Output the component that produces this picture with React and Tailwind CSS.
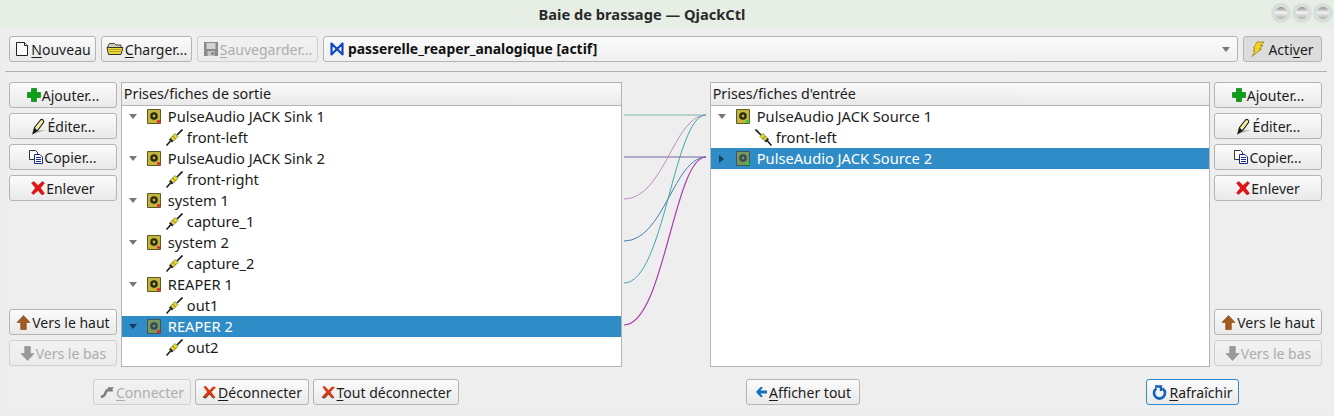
import React from "react";

function IconNew() {
  return (
    <svg width="16" height="16" viewBox="0 0 16 16">
      <path d="M2.500 1.500h8l3 3v10h-11z" fill="#fff" stroke="#222" />
      <path d="M10.500 1.500v3h3" fill="#ddd" stroke="#222" />
    </svg>
  );
}

function IconOpen() {
  return (
    <svg width="18" height="16" viewBox="0 0 18 16">
      <path d="M2 5l1.500-2.500h5L10 4h5v3H2z" fill="#cfcfb0" stroke="#444" />
      <path d="M1 6.500h16l-2 7H2.500z" fill="#e8d93a" stroke="#333" />
      <path d="M3 8.500h12M3.500 10.500h11" stroke="#b8a820" />
    </svg>
  );
}

function IconSave() {
  return (
    <svg width="16" height="16" viewBox="0 0 16 16">
      <path d="M1 1h14v14H1z" fill="#8a8a8a" />
      <path d="M3.500 2h9v6h-9z" fill="#d2d2d2" />
      <path d="M4.500 10h7v5h-7z" fill="#c4c4c4" />
      <path d="M8.500 11h2v3h-2z" fill="#777" />
    </svg>
  );
}

function IconPatch() {
  return (
    <svg width="14" height="14" viewBox="0 0 14 14" fill="none">
      <path d="M1.500 1.500v11l5.500-5.500zM12.500 1.500v11l-5.500-5.500z" stroke="#1546c8" strokeWidth="2.200" strokeLinejoin="round" />
    </svg>
  );
}

function IconBolt() {
  return (
    <svg width="14" height="16" viewBox="0 0 14 16">
      <path d="M6 1h7L9.500 4.500H12L8 8h2.500L1 15.500 4 10H2l2-3H2.500z" fill="#f4d21e" stroke="#8d7a20" strokeWidth="0.700" />
    </svg>
  );
}

function IconAdd() {
  return (
    <svg width="14" height="14" viewBox="0 0 14 14">
      <path d="M4.500 .5h5v4h4v5h-4v4h-5v-4h-4v-5h4z" fill="#0ca018" stroke="#0a7a12" strokeWidth="0.700" />
    </svg>
  );
}

function IconEdit() {
  return (
    <svg width="16" height="17" viewBox="0 0 16 17">
      <path d="M2 16l13-4-7 .5z" fill="#a8a8a8" />
      <path d="M2 15.500l1.500-6L9.500 2c1.500-1.500 4 .5 3 2.500L6.500 12.500z" fill="#f4eda0" stroke="#1c1c1c" strokeWidth="1.100" />
      <path d="M2 15.500l1.500-6 3 3z" fill="#1c1c1c" />
    </svg>
  );
}

function IconCopy() {
  return (
    <svg width="14" height="14" viewBox="0 0 14 14">
      <path d="M.5.5h6l2 2v7h-8z" fill="#fff" stroke="#333" />
      <path d="M5.500 4.500h5.500l2.500 2.500v6.500h-8z" fill="#fff" stroke="#1a2a8a" />
      <path d="M7 7.500h5M7 9.500h5M7 11.500h5" stroke="#1a2a8a" />
    </svg>
  );
}

function IconRemove() {
  return (
    <svg width="14" height="14" viewBox="0 0 14 14">
      <path d="M.5 2l2.500-1.500L7 4.500 11.500.5 13.500 2 9.500 7l4 5.500-2.500 1.500L7 9.500 2.500 13.500.5 12l4-5z" fill="#e81010" stroke="#a01818" strokeWidth="0.500" />
    </svg>
  );
}

function IconUp({ off }) {
  return (
    <svg width="15" height="17" viewBox="0 0 16 17">
      <path d="M8 1l7 7.500h-4V16H5V8.500H1z" fill={off ? "#9a9a9a" : "#a5591c"} stroke={off ? "#8a8a8a" : "#70400f"} strokeWidth="0.600" />
    </svg>
  );
}

function IconDown({ off }) {
  return (
    <svg width="15" height="17" viewBox="0 0 16 17">
      <path d="M8 16L1 8.500h4V1h6v7.500h4z" fill={off ? "#9a9a9a" : "#a5591c"} stroke={off ? "#8a8a8a" : "#70400f"} strokeWidth="0.600" />
    </svg>
  );
}

function IconConnect() {
  return (
    <svg width="15" height="14" viewBox="0 0 17 14">
      <path d="M1 12.500c3.500 0 4.500-2 5.500-5s2-3 4.500-3" fill="none" stroke="#7e7e7e" strokeWidth="3" />
      <path d="M9 1.500h7l-2 2.500 1 2.500H9z" fill="#7e7e7e" />
    </svg>
  );
}

function IconDisconnect() {
  return (
    <svg width="15" height="14" viewBox="0 0 16 14">
      <path d="M1.500 1.500L4 .5l4 4.500 4-4 3 1-5 5 4 5.500-3 1L7.500 9 4 13l-3-1 4.500-5z" fill="#d8380e" />
      <path d="M1 12.500l3 1 4-4.500M12 13.500l2-1" fill="none" stroke="#3a2a20" strokeWidth="1" />
    </svg>
  );
}

function IconShowAll() {
  return (
    <svg width="13" height="12" viewBox="0 0 13 12">
      <path d="M1 6l4.500-5h2.500L5.500 4.500H12v3H5.500L8 11H5.500z" fill="#1270c0" />
    </svg>
  );
}

function IconRefresh() {
  return (
    <svg width="15" height="15" viewBox="0 0 15 15" fill="none">
      <path d="M4.500 3.500a5.500 5.500 0 1 0 6 0" stroke="#1462b8" strokeWidth="2.600" />
      <path d="M3 1.500h6v4.500" stroke="#1462b8" strokeWidth="2.400" />
    </svg>
  );
}

function Speaker({ kind, selected }) {
  const body = selected ? "#7b9460" : "#c4b53c";
  return (
    <svg width="14" height="15" viewBox="0 0 14 15">
      <path d="M.5.5h13v14H.5z" fill={body} stroke={selected ? "#3a5a50" : "#5a5a24"} />
      <circle cx="7" cy="7" r="3.800" fill={selected ? "#2f4d50" : "#2b2b12"} />
      <circle cx="7" cy="7" r="1.400" fill={body} />
      <path d="M10 12.500h3.500" stroke={kind === "out" ? "#e8202a" : "#20d040"} strokeWidth="2.400" />
    </svg>
  );
}

function Plug({ flip }) {
  return (
    <svg width="17" height="17" viewBox="0 0 17 17" className={flip ? "-scale-x-100" : ""}>
      <path d="M.5 16.500l4-4.500" stroke="#111" strokeWidth="1.500" />
      <path d="M3 10.500l1.500-1.500 3 3L6 13.500z" fill="#1c1c1c" />
      <path d="M4.500 9l4.500-4.500 3 3L7.500 12z" fill="#ecdc1c" stroke="#555" strokeWidth="0.600" />
      <path d="M6.500 7l3 3" stroke="#555" strokeWidth="0.800" />
      <path d="M11 6l5.500-5.500" stroke="#1c1c1c" strokeWidth="1.700" />
    </svg>
  );
}

function Underlined({ text, at }) {
  if (at === undefined) return <span>{text}</span>;
  return (
    <span>
      {text.slice(0, at)}
      <span className="underline underline-offset-2">{text[at]}</span>
      {text.slice(at + 1)}
    </span>
  );
}

function Btn({ icon, text, at, off, className = "" }) {
  return (
    <button
      className={
        "h-[26px] flex items-center justify-center gap-[1px] rounded-[3px] border bg-gradient-to-b text-[14px] " +
        (off
          ? "border-[#d0d0d0] from-[#f2f2f2] to-[#ebebeb] text-[#adadad] "
          : "border-[#b4b4b4] from-[#fbfbfb] to-[#e9e9e9] text-[#1c1c1c] ") +
        className
      }
    >
      {icon}
      <Underlined text={text} at={at} />
    </button>
  );
}

function SideButtons() {
  return (
    <div className="w-[108px] h-[284px] flex flex-col">
      <div className="flex flex-col gap-[5px]">
        <Btn icon={<IconAdd />} text="Ajouter..." className="w-full" />
        <Btn icon={<IconEdit />} text="Éditer..." className="w-full" />
        <Btn icon={<IconCopy />} text="Copier..." className="w-full" />
        <Btn icon={<IconRemove />} text="Enlever" className="w-full" />
      </div>
      <div className="mt-auto flex flex-col gap-[5px]">
        <Btn icon={<IconUp />} text="Vers le haut" className="w-full" />
        <Btn icon={<IconDown off />} text="Vers le bas" off className="w-full" />
      </div>
    </div>
  );
}

function ClientRow({ label, open, kind, selected }) {
  return (
    <div
      className={
        "h-[21px] flex items-center pl-[5px] " +
        (selected ? "bg-[#308cc6] text-white" : "text-[#1c1c1c]")
      }
    >
      <span className="w-[12px] flex justify-center">
        {open ? (
          <span className={"w-0 h-0 border-x-[4px] border-x-transparent border-t-[5px] " + (selected ? "border-t-[#15405c]" : "border-t-[#777777]")} />
        ) : (
          <span className="w-0 h-0 border-y-[4px] border-y-transparent border-l-[5px] border-l-[#15405c]" />
        )}
      </span>
      <span className="ml-[8px] w-[14px] flex">
        <Speaker kind={kind} selected={selected} />
      </span>
      <span className="ml-[7px] -translate-y-px">{label}</span>
    </div>
  );
}

function PortRow({ label, flip }) {
  return (
    <div className="h-[21px] flex items-center pl-[44px] text-[#1c1c1c]">
      <Plug flip={flip} />
      <span className="ml-[4px] -translate-y-px">{label}</span>
    </div>
  );
}

function Tree({ title, children }) {
  return (
    <div className="w-[501px] h-[285px] border border-[#b4b4b4] bg-white text-[14.67px] flex flex-col">
      <div className="h-[23px] shrink-0 pl-[2px] flex items-center bg-gradient-to-b from-[#fafafa] to-[#eaeaea] border-b border-[#b4b4b4] text-[#1c1c1c] text-[14.3px]">
        {title}
      </div>
      {children}
    </div>
  );
}

function Connections() {
  const curve = (y1, y2) => `M0 ${y1}C40 ${y1} 50 ${y2} 82 ${y2}`;
  return (
    <svg width="86" height="285" viewBox="0 0 86 285" fill="none" className="absolute left-[1px] top-0">
      <path d={curve(33, 33)} stroke="#a5c9c5" strokeWidth="1.300" />
      <path d={curve(75, 75)} stroke="#9d93bd" strokeWidth="1.300" />
      <path d={curve(117, 33)} stroke="#bb8fc0" strokeWidth="1" />
      <path d={curve(159, 75)} stroke="#4a7db5" strokeWidth="1" />
      <path d={curve(201, 33)} stroke="#3fa8a8" strokeWidth="1" />
      <path d={curve(243, 75)} stroke="#a83fae" strokeWidth="1.200" />
    </svg>
  );
}

export default function App() {
  return (
    <div className="w-[1334px] h-[416px] bg-[#e6eee6] flex flex-col overflow-hidden font-['Noto_Sans',sans-serif]">
      <div className="h-[28px] shrink-0 relative flex items-center justify-center pr-[50px] text-[14.67px] font-bold text-[#2a2a2a]">
        Baie de brassage — QjackCtl
        <div className="absolute right-[1px] top-[3px] flex gap-[1px]">
          {[0, 1, 2].map((i) => (
            <span key={i} className="w-[20px] h-[20px] rounded-full bg-[#d8dfd8] flex items-center justify-center">
              <span className="w-[12px] h-[12px] rounded-full bg-gradient-to-b from-[#8c8c8c] via-[#f4f4f4] via-45% to-[#b0b0b0]" />
            </span>
          ))}
        </div>
      </div>
      <div className="mx-[1px] h-[387px] bg-[#eeeeee] pt-[8px] pl-[8px] pr-[11px] flex flex-col">
        <div className="flex gap-[5px]">
          <Btn icon={<IconNew />} text="Nouveau" at={0} className="w-[87px]" />
          <Btn icon={<IconOpen />} text="Charger..." at={0} className="w-[91px]" />
          <Btn icon={<IconSave />} text="Sauvegarder..." at={0} off className="w-[121px]" />
          <div className="w-[915px] h-[26px] rounded-[3px] border border-[#b4b4b4] bg-gradient-to-b from-[#fbfbfb] to-[#efefef] flex items-center pl-[6px] pr-[7px] text-[13.9px] font-bold text-[#111111]">
            <IconPatch />
            <span className="ml-[4px]">passerelle_reaper_analogique [actif]</span>
            <span className="ml-auto w-0 h-0 border-x-[4px] border-x-transparent border-t-[5px] border-t-[#777777]" />
          </div>
          <button className="w-[79px] h-[26px] flex items-center justify-center gap-[3px] rounded-[3px] border border-[#b4b4b4] bg-[#dcdcdc] text-[14px] text-[#1c1c1c]">
            <IconBolt />
            <Underlined text="Activer" at={4} />
          </button>
        </div>
        <div className="h-px bg-[#b0b0b0] mt-[9px] -ml-[4px] mr-[-5px]" />
        <div className="mt-[10px] flex">
          <SideButtons />
          <div className="ml-[4px]">
            <Tree title="Prises/fiches de sortie">
              <ClientRow label="PulseAudio JACK Sink 1" open kind="out" />
              <PortRow label="front-left" />
              <ClientRow label="PulseAudio JACK Sink 2" open kind="out" />
              <PortRow label="front-right" />
              <ClientRow label="system 1" open kind="out" />
              <PortRow label="capture_1" />
              <ClientRow label="system 2" open kind="out" />
              <PortRow label="capture_2" />
              <ClientRow label="REAPER 1" open kind="out" />
              <PortRow label="out1" />
              <ClientRow label="REAPER 2" open kind="out" selected />
              <PortRow label="out2" />
            </Tree>
          </div>
          <div className="relative w-[87px] h-[285px] ml-px">
            <Connections />
          </div>
          <Tree title="Prises/fiches d'entrée">
            <ClientRow label="PulseAudio JACK Source 1" open kind="in" />
            <PortRow label="front-left" flip />
            <ClientRow label="PulseAudio JACK Source 2" kind="in" selected />
          </Tree>
          <div className="ml-[4px]">
            <SideButtons />
          </div>
        </div>
        <div className="mt-[12px] flex">
          <div className="ml-[84px] flex gap-[4px]">
            <Btn icon={<IconConnect />} text="Connecter" at={0} off className="w-[98px]" />
            <Btn icon={<IconDisconnect />} text="Déconnecter" at={0} className="w-[114px]" />
            <Btn icon={<IconDisconnect />} text="Tout déconnecter" at={0} className="w-[146px]" />
          </div>
          <Btn icon={<IconShowAll />} text="Afficher tout" at={0} className="w-[114px] ml-[287px]" />
          <button className="w-[93px] h-[26px] ml-[286px] flex items-center justify-center gap-[2px] rounded-[3px] border border-[#308cc6] bg-gradient-to-b from-[#fbfbfb] to-[#e9e9e9] text-[14px] text-[#1c1c1c]">
            <IconRefresh />
            <Underlined text="Rafraîchir" at={0} />
          </button>
        </div>
      </div>
    </div>
  );
}
